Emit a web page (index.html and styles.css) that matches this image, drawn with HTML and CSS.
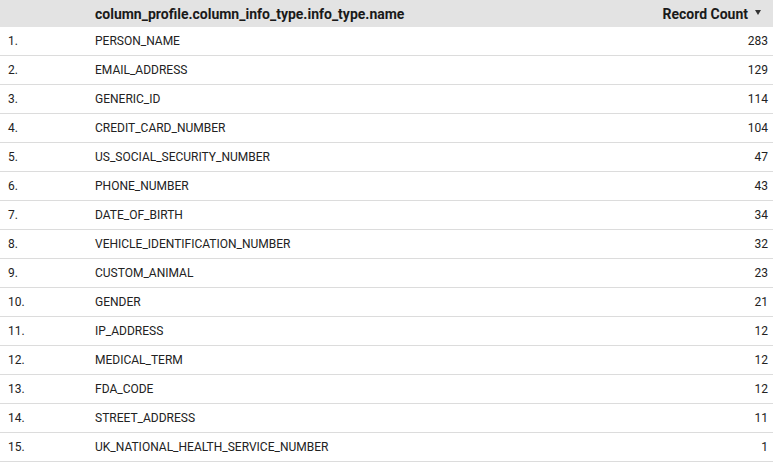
FILE: index.html
```html
<!DOCTYPE html>
<html>
<head>
<meta charset="utf-8">
<link rel="stylesheet" href="styles.css">
</head>
<body>
<div class="table">
  <div class="row head">
    <div class="idx"></div>
    <div class="name">column_profile.column_info_type.info_type.name</div>
    <div class="count">Record Count<span class="arrow"></span></div>
  </div>
  <div class="row"><div class="idx">1.</div><div class="name">PERSON_NAME</div><div class="count">283</div></div>
  <div class="row"><div class="idx">2.</div><div class="name">EMAIL_ADDRESS</div><div class="count">129</div></div>
  <div class="row"><div class="idx">3.</div><div class="name">GENERIC_ID</div><div class="count">114</div></div>
  <div class="row"><div class="idx">4.</div><div class="name">CREDIT_CARD_NUMBER</div><div class="count">104</div></div>
  <div class="row"><div class="idx">5.</div><div class="name">US_SOCIAL_SECURITY_NUMBER</div><div class="count">47</div></div>
  <div class="row"><div class="idx">6.</div><div class="name">PHONE_NUMBER</div><div class="count">43</div></div>
  <div class="row"><div class="idx">7.</div><div class="name">DATE_OF_BIRTH</div><div class="count">34</div></div>
  <div class="row"><div class="idx">8.</div><div class="name">VEHICLE_IDENTIFICATION_NUMBER</div><div class="count">32</div></div>
  <div class="row"><div class="idx">9.</div><div class="name">CUSTOM_ANIMAL</div><div class="count">23</div></div>
  <div class="row"><div class="idx">10.</div><div class="name">GENDER</div><div class="count">21</div></div>
  <div class="row"><div class="idx">11.</div><div class="name">IP_ADDRESS</div><div class="count">12</div></div>
  <div class="row"><div class="idx">12.</div><div class="name">MEDICAL_TERM</div><div class="count">12</div></div>
  <div class="row"><div class="idx">13.</div><div class="name">FDA_CODE</div><div class="count">12</div></div>
  <div class="row"><div class="idx">14.</div><div class="name">STREET_ADDRESS</div><div class="count">11</div></div>
  <div class="row"><div class="idx">15.</div><div class="name">UK_NATIONAL_HEALTH_SERVICE_NUMBER</div><div class="count">1</div></div>
</div>
</body>
</html>
```
FILE: styles.css
```css
html, body {
  margin: 0;
  padding: 0;
  background: #fff;
}
body {
  font-family: Roboto, "Liberation Sans", sans-serif;
  font-size: 12px;
  color: #222;
}
.table {
  width: 773px;
  display: flex;
  flex-direction: column;
}
.row {
  display: flex;
  align-items: center;
  height: 28px;
  border-bottom: 1px solid #dcdcdc;
}
.row.head {
  height: 27px;
  border-bottom: none;
  background: #e3e3e3;
  font-weight: 700;
  font-size: 14px;
  color: #1a1a1a;
}
.idx {
  width: 87px;
  padding-left: 8px;
  flex: none;
}
.name {
  flex: 1;
}
.count {
  padding-right: 5px;
  text-align: right;
  display: flex;
  align-items: center;
}
.row.head .count {
  padding-right: 12px;
}
.arrow {
  width: 0;
  height: 0;
  margin-left: 7px;
  border-left: 3.5px solid transparent;
  border-right: 3.5px solid transparent;
  border-top: 5px solid #333;
  margin-top: -2px;
}
```
